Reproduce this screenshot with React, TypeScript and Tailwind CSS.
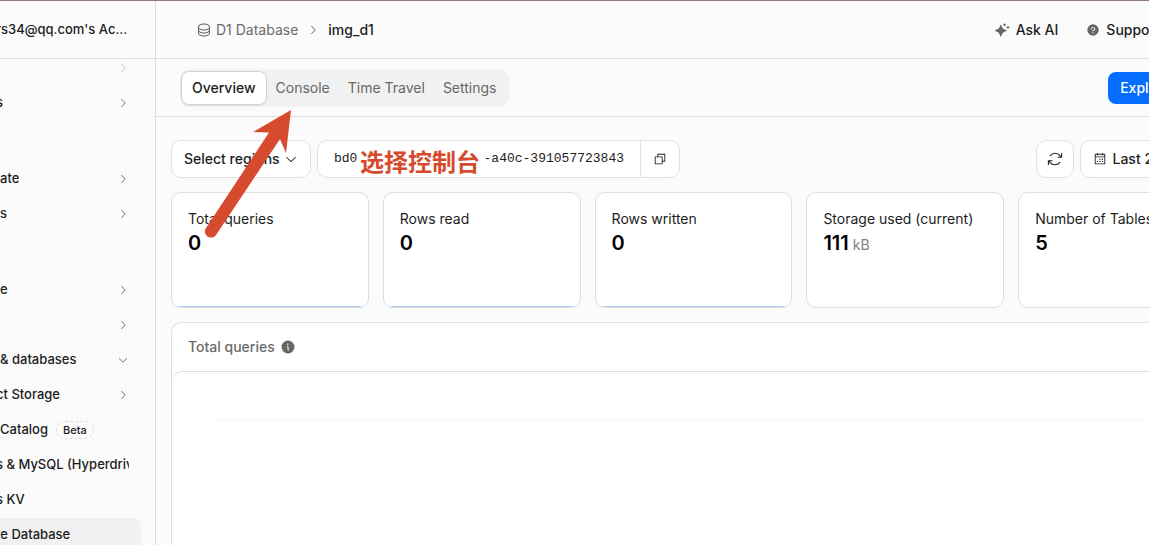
import type { ReactNode } from "react"
import { clsx } from "clsx"
import {
    PiCalendarDots,
    PiCaretDown,
    PiCaretRight,
    PiCopy,
    PiDatabase,
    PiInfoFill,
    PiQuestionFill,
} from "react-icons/pi"

interface NavItem {
    label: string
    cut?: boolean
    caret?: "right" | "down"
    badge?: string
    active?: boolean
    faded?: boolean
}

interface Metric {
    label: string
    value: string
    unit?: string
    line?: boolean
}

const navGroups: NavItem[][] = [
    [
        { label: "", caret: "right", faded: true },
        { label: "s", cut: true, caret: "right" },
    ],
    [
        { label: "ate", caret: "right" },
        { label: "s", caret: "right" },
    ],
    [
        { label: "e", caret: "right" },
        { label: "", caret: "right" },
        { label: "& databases", caret: "down" },
        { label: "ct Storage", cut: true, caret: "right" },
        { label: "Catalog", badge: "Beta" },
        { label: "s & MySQL (Hyperdrive)", cut: true },
        { label: "s KV", cut: true },
        { label: "te Database", cut: true, active: true },
    ],
]

const tabs = ["Overview", "Console", "Time Travel", "Settings"]

const metrics: Metric[] = [
    { label: "Total queries", value: "0", line: true },
    { label: "Rows read", value: "0", line: true },
    { label: "Rows written", value: "0", line: true },
    { label: "Storage used (current)", value: "111", unit: "kB" },
    { label: "Number of Tables", value: "5" },
]

function SparkleIcon() {
    return (
        <svg viewBox="0 0 16 16" className="size-4 text-[#666]" fill="currentColor" aria-hidden="true">
            <path d="M6.8 2.4 8.8 6.5 13 8.6 8.8 10.7 6.8 15 4.8 10.7 0.6 8.6 4.8 6.5Z" />
            <path d="M10.6 0.8 11.2 2.2 12.6 2.8 11.2 3.4 10.6 4.8 10 3.4 8.6 2.8 10 2.2Z" />
            <path d="M14 3.4 14.6 4.8 16 5.4 14.6 6 14 7.4 13.4 6 12 5.4 13.4 4.8Z" />
        </svg>
    )
}

function RefreshIcon() {
    return (
        <svg
            viewBox="0 0 16 16"
            className="size-4"
            fill="none"
            stroke="currentColor"
            strokeWidth="1.1"
            strokeLinecap="round"
            strokeLinejoin="round"
            aria-hidden="true"
        >
            <path d="M3.2 4.6A6.2 6.2 0 0 1 13 4.6L14.6 6.2M14.6 2.6V6.2H11" />
            <path d="M12.8 11.4A6.2 6.2 0 0 1 3 11.4L1.4 9.8M1.4 13.4V9.8H5" />
        </svg>
    )
}

function NavRow({ item }: { item: NavItem }) {
    return (
        <a
            href="#"
            className={clsx(
                "flex h-[34px] items-center rounded-r-lg pr-3 text-[#1d1d1d]",
                item.active && "bg-[#f1f1f1]"
            )}
        >
            <span className={clsx("min-w-0 overflow-hidden whitespace-nowrap", item.cut && "-ml-1")}>
                {item.label}
            </span>
            {item.badge && (
                <span className="ml-2 rounded-full border border-dashed border-[#dcdcdc] px-[6px] text-[11px] leading-4 font-medium">
                    {item.badge}
                </span>
            )}
            {item.caret && (
                <span className={clsx("ml-auto text-[#777]", item.faded && "opacity-40")}>
                    {item.caret === "down" ? <PiCaretDown className="size-3" /> : <PiCaretRight className="size-3" />}
                </span>
            )}
        </a>
    )
}

function Sidebar() {
    return (
        <aside className="flex w-[156px] shrink-0 flex-col overflow-hidden border-r border-[#dedede]">
            <button
                type="button"
                className="flex h-[58px] shrink-0 items-center border-b border-[#dedede] text-[13px] font-medium whitespace-nowrap text-[#1d1d1d]"
            >
                <span className="-ml-1">rs34@qq.com's Ac...</span>
            </button>
            <div className="overflow-hidden">
                <nav className="-mt-2 mr-[14px] flex flex-col gap-[42px] text-[13px] font-medium">
                    {navGroups.map((group, idx) => (
                        <div key={idx} className="flex flex-col gap-px">
                            {group.map((item, i) => (
                                <NavRow key={i} item={item} />
                            ))}
                        </div>
                    ))}
                </nav>
            </div>
        </aside>
    )
}

function Header() {
    return (
        <header className="flex h-[58px] shrink-0 items-center border-b border-[#dedede] pr-4 pl-10 text-sm">
            <a href="#" className="flex items-center gap-1 text-[#6b6b6b]">
                <PiDatabase className="size-4" />
                D1 Database
            </a>
            <PiCaretRight className="mx-[9px] size-3 text-[#666]" />
            <span className="font-medium text-[#1d1d1d]">img_d1</span>
            <div className="ml-auto flex items-center gap-7 pr-14 font-medium text-[#1d1d1d]">
                <button type="button" className="flex items-center gap-[6px]">
                    <SparkleIcon />
                    Ask AI
                </button>
                <button type="button" className="flex items-center gap-[6px]">
                    <PiQuestionFill className="size-[14px] text-[#666]" />
                    Support
                </button>
            </div>
        </header>
    )
}

function TabBar() {
    return (
        <div className="flex h-[58px] shrink-0 items-center justify-between border-b border-[#dedede] pr-[15px] pl-6">
            <div role="tablist" className="flex items-center rounded-[10px] bg-[#f1f1f1] py-[2px] pr-[3px] pl-px text-sm">
                {tabs.map((tab, idx) => (
                    <button
                        key={tab}
                        type="button"
                        role="tab"
                        aria-selected={idx === 0}
                        className={clsx(
                            "h-[34px]",
                            idx === 0
                                ? "rounded-lg border border-[#d0d0d0] bg-white px-[10px] font-medium text-[#1d1d1d] shadow-xs"
                                : "px-[9px] text-[#666]"
                        )}
                    >
                        {tab}
                    </button>
                ))}
            </div>
            <button type="button" className="h-8 rounded-lg bg-[#056dff] px-3 text-sm font-medium text-white">
                Explore Data
            </button>
        </div>
    )
}

function Box({ className, children }: { className?: string; children: ReactNode }) {
    return (
        <div className={clsx("flex h-[38px] items-center rounded-[10px] border border-[#e2e2e2] bg-white", className)}>
            {children}
        </div>
    )
}

function Toolbar() {
    return (
        <div className="flex items-center gap-[6px] text-sm text-[#1d1d1d]">
            <Box className="relative">
                <select
                    aria-label="Select regions"
                    className="h-full w-[138px] appearance-none bg-transparent pl-3 font-medium outline-none"
                >
                    <option>Select regions</option>
                </select>
                <PiCaretDown className="pointer-events-none absolute right-3 size-[14px]" />
            </Box>
            <Box>
                <code className="flex w-[322px] justify-between px-4 font-['Liberation_Mono',monospace] text-[13px]">
                    <span>bd0</span>
                    <span>-a40c-391057723843</span>
                </code>
                <button
                    type="button"
                    aria-label="Copy database ID"
                    className="flex h-full w-[39px] items-center justify-center border-l border-[#e2e2e2]"
                >
                    <PiCopy className="size-[14px]" />
                </button>
            </Box>
            <Box className="ml-auto">
                <button type="button" aria-label="Refresh" className="flex h-full w-9 items-center justify-center">
                    <RefreshIcon />
                </button>
            </Box>
            <Box>
                <button type="button" className="flex h-full items-center gap-[6px] px-3 font-medium">
                    <PiCalendarDots className="size-[14px]" />
                    Last 24 hours
                </button>
            </Box>
        </div>
    )
}

function MetricCard({ metric }: { metric: Metric }) {
    return (
        <div className="flex h-[116px] flex-col overflow-hidden rounded-[10px] border border-[#dedede] bg-white">
            <div className="flex-1 px-4 pt-4">
                <div className="text-sm leading-5 whitespace-nowrap text-[#1d1d1d]">{metric.label}</div>
                <div className="text-xl leading-7 font-semibold text-black">
                    {metric.value}
                    {metric.unit && <span className="ml-1 text-sm font-normal text-[#808080]">{metric.unit}</span>}
                </div>
            </div>
            {metric.line && <div className="h-px bg-[#a9c9f5]" />}
        </div>
    )
}

function ChartPanel() {
    return (
        <section className="flex flex-1 flex-col rounded-t-[10px] border border-b-0 border-[#dedede] bg-white">
            <h2 className="flex h-12 shrink-0 items-center gap-[5px] px-4 text-sm font-medium text-[#6b6b6b]">
                Total queries
                <PiInfoFill className="size-4 text-[#666]" />
            </h2>
            <div className="flex-1 rounded-t-[10px] border-t border-[#dedede] pt-12 pr-4 pl-11">
                <div className="border-t border-[#f6f6f6]" />
            </div>
        </section>
    )
}

function Annotation() {
    return (
        <div className="pointer-events-none absolute inset-0">
            <svg viewBox="0 0 90 130" className="absolute top-[108px] left-[203px] h-[130px] w-[90px]" aria-hidden="true">
                <path
                    d="M88 1 83 44 77 30 13 126A6 6 0 0 1 3 119L66 23.5 50 23Z"
                    fill="#d64a2e"
                />
            </svg>
            <span className="absolute top-[144px] left-[360px] font-['Noto_Sans_CJK_SC',sans-serif] text-2xl leading-8 font-bold whitespace-nowrap text-[#d64a2e]">
                选择控制台
            </span>
        </div>
    )
}

export default function App() {
    return (
        <div className="relative flex h-screen flex-col overflow-hidden border-t border-[#8f7880] bg-[#fbfbfb] font-['Inter',sans-serif]">
            <div className="flex min-h-0 flex-1">
                <Sidebar />
                {/* The main column runs past the right edge of the window */}
                <main className="-mr-[83px] flex min-w-0 flex-1 flex-col">
                    <Header />
                    <TabBar />
                    <div className="flex min-h-0 flex-1 flex-col gap-[14px] px-[15px] pt-[23px]">
                        <Toolbar />
                        <div className="mr-px grid grid-cols-5 gap-[14px]">
                            {metrics.map((metric) => (
                                <MetricCard key={metric.label} metric={metric} />
                            ))}
                        </div>
                        <ChartPanel />
                    </div>
                </main>
            </div>
            <Annotation />
        </div>
    )
}
